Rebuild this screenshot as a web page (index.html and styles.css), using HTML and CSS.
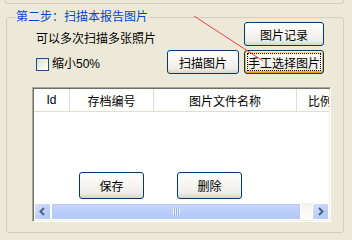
FILE: index.html
```html
<!DOCTYPE html>
<html lang="zh">
<head>
<meta charset="utf-8">
<link rel="stylesheet" href="styles.css">
</head>
<body>
<div class="window">
  <div class="prev-box"></div>
  <div class="group">
    <span class="group-title">第二步：扫描本报告图片</span>
    <div class="top">
      <div class="options">
        <div class="hint">可以多次扫描多张照片</div>
        <label class="check"><span class="box"></span><span>缩小50%</span></label>
      </div>
      <div class="actions">
        <div class="row"><button class="btn w80">图片记录</button></div>
        <div class="row"><button class="btn w72">扫描图片</button><button class="btn w80 focus">手工选择图片</button></div>
      </div>
    </div>
    <div class="list">
      <div class="header">
        <div class="col c-id">Id</div>
        <div class="col c-no">存档编号</div>
        <div class="col c-file">图片文件名称</div>
        <div class="col c-ratio">比例</div>
      </div>
      <div class="body">
        <button class="btn save">保存</button>
        <button class="btn del">删除</button>
      </div>
      <div class="hscroll">
        <div class="arrow"><svg width="9" height="9" viewBox="0 0 9 9"><path d="M6 1 L2.5 4.5 L6 8" fill="none" stroke="#4D6185" stroke-width="2"/></svg></div>
        <div class="track"><div class="thumb"><span class="grip"></span></div></div>
        <div class="arrow"><svg width="9" height="9" viewBox="0 0 9 9"><path d="M3 1 L6.5 4.5 L3 8" fill="none" stroke="#4D6185" stroke-width="2"/></svg></div>
      </div>
    </div>
  </div>
  <svg class="annot" width="352" height="240" viewBox="0 0 352 240"><line x1="194" y1="16" x2="263" y2="61" stroke="#FF3C3C" stroke-width="1"/></svg>
</div>
</body>
</html>
```
FILE: styles.css
```css
* { box-sizing: border-box; }
html, body { margin: 0; padding: 0; }
body {
  background: #ECE9D8;
  font-family: "Liberation Sans", "Noto Sans CJK SC", sans-serif;
  font-size: 12px;
  color: #000;
}
.window {
  position: relative;
  width: 352px;
  height: 240px;
  overflow: hidden;
}
.prev-box {
  height: 4px;
  margin: 0 8px 0 5px;
  border: 1px solid #D0D0BF;
  border-top: none;
  border-radius: 0 0 3px 3px;
}
.group {
  position: relative;
  margin: 13px 0 0 6px;
  width: 338px;
  height: 216px;
  border: 1px solid #D0D0BF;
  border-radius: 3px;
}
.group-title {
  position: absolute;
  left: 8px;
  top: -8px;
  padding: 0 1px;
  line-height: 14px;
  color: #0046D5;
  background: #ECE9D8;
}
.top {
  display: flex;
  justify-content: space-between;
  height: 69px;
  padding: 4px 19px 0 29px;
}
.options {
  padding-top: 10px;
}
.hint {
  line-height: 14px;
}
.check {
  display: flex;
  align-items: center;
  gap: 3px;
  margin-top: 12px;
  height: 13px;
  line-height: 13px;
}
.box {
  width: 13px;
  height: 13px;
  border: 1px solid #1C5180;
  background: linear-gradient(135deg, #DCDCD7 0%, #F5F5F2 70%, #FFFFFF 100%);
}
.actions {
  display: flex;
  flex-direction: column;
  align-items: flex-end;
  gap: 4px;
}
.row {
  display: flex;
  gap: 5px;
}
.btn {
  height: 24px;
  padding: 0;
  font: inherit;
  color: #000;
  border: 1px solid #003C74;
  border-radius: 3px;
  background: linear-gradient(180deg, #FFFFFF 0%, #F6F5F1 45%, #EEEDE7 80%, #D9D4C9 100%);
}
.w80 { width: 80px; }
.w72 { width: 72px; }
.btn.focus {
  box-shadow: inset 0 1px 0 #FFF0CF, inset 0 -1px 0 #E5A01A, inset 1px 0 0 #F8B330, inset -1px 0 0 #F8B330, inset 0 2px 0 #F9D38A, inset 0 -2px 0 #F2B542;
  outline: 1px dotted #000;
  outline-offset: -4px;
}
.list {
  display: flex;
  flex-direction: column;
  margin-left: 25px;
  width: 299px;
  height: 135px;
  border: 1px solid;
  border-color: #ACA899 #FFFFFF #FFFFFF #ACA899;
  box-shadow: inset 1px 1px 0 #716F64, inset -1px -1px 0 #F1EFE2;
  padding: 1px;
  background: #FFFFFF;
}
.header {
  display: flex;
  height: 23px;
  flex-shrink: 0;
  overflow: hidden;
  border-bottom: 1px solid #E2DECD;
  background: #FFFFFF;
}
.col {
  flex-shrink: 0;
  display: flex;
  align-items: center;
  justify-content: center;
  border-right: 1px solid #E2DECD;
}
.c-id { width: 36px; }
.c-no { width: 84px; }
.c-file { width: 143px; }
.c-ratio { width: 46px; border-right: none; }
.body {
  position: relative;
  flex: 1;
  background: #FFFFFF;
}
.btn.save, .btn.del {
  position: absolute;
  top: 60px;
  width: 65px;
  height: 27px;
}
.btn.save { left: 45px; }
.btn.del { left: 143px; }
.hscroll {
  display: flex;
  height: 17px;
  flex-shrink: 0;
  background: linear-gradient(180deg, #F3F1EC 0%, #FEFEFB 100%);
}
.arrow {
  width: 17px;
  height: 17px;
  display: flex;
  align-items: center;
  justify-content: center;
  border: 1px solid #FFFFFF;
  border-radius: 2px;
  background: linear-gradient(135deg, #D5E1FD 0%, #BCCFF9 60%, #AFC5F7 100%);
}
.track {
  flex: 1;
  display: flex;
}
.thumb {
  width: 250px;
  height: 17px;
  display: flex;
  align-items: center;
  justify-content: center;
  border: 1px solid #FFFFFF;
  border-radius: 2px;
  background: linear-gradient(180deg, #C9D8FC 0%, #BBCEF9 50%, #B3C8F7 100%);
  box-shadow: inset 0 0 0 1px #B5C8F3;
}
.grip {
  width: 7px;
  height: 7px;
  background: repeating-linear-gradient(90deg, #EEF3FE 0 1px, #8CB0F8 1px 2px);
}
.annot {
  position: absolute;
  left: 0;
  top: 0;
  pointer-events: none;
}
```
